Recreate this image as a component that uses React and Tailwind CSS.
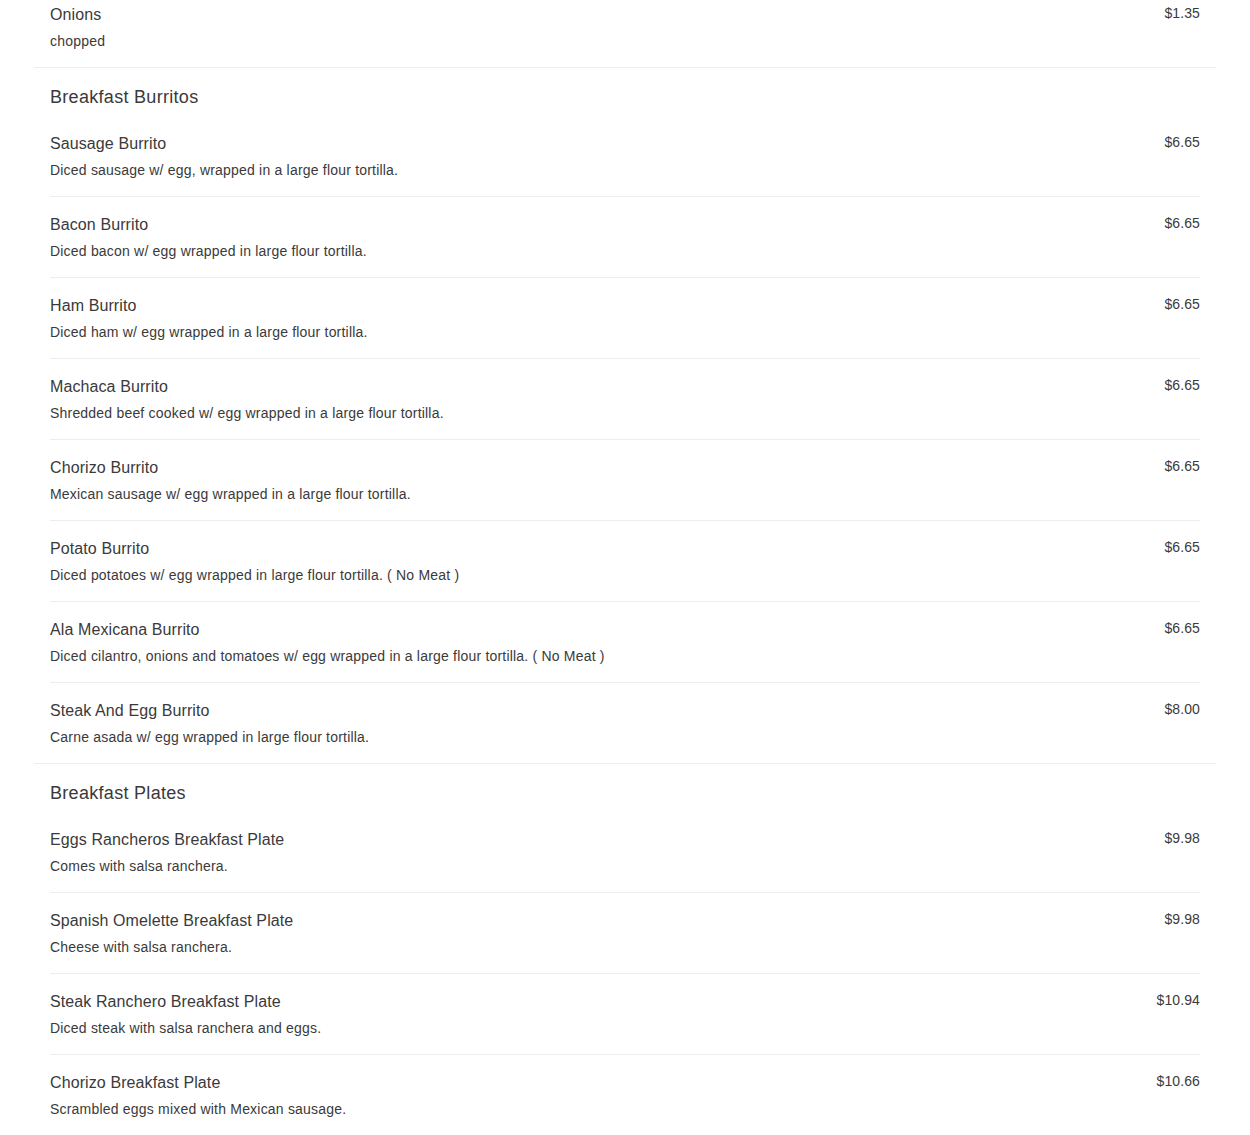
import React from 'react';

const sections = [
  {
    title: 'Breakfast Burritos',
    items: [
      { name: 'Sausage Burrito', desc: 'Diced sausage w/ egg, wrapped in a large flour tortilla.', price: '$6.65' },
      { name: 'Bacon Burrito', desc: 'Diced bacon w/ egg wrapped in large flour tortilla.', price: '$6.65' },
      { name: 'Ham Burrito', desc: 'Diced ham w/ egg wrapped in a large flour tortilla.', price: '$6.65' },
      { name: 'Machaca Burrito', desc: 'Shredded beef cooked w/ egg wrapped in a large flour tortilla.', price: '$6.65' },
      { name: 'Chorizo Burrito', desc: 'Mexican sausage w/ egg wrapped in a large flour tortilla.', price: '$6.65' },
      { name: 'Potato Burrito', desc: 'Diced potatoes w/ egg wrapped in large flour tortilla. ( No Meat )', price: '$6.65' },
      { name: 'Ala Mexicana Burrito', desc: 'Diced cilantro, onions and tomatoes w/ egg wrapped in a large flour tortilla. ( No Meat )', price: '$6.65' },
      { name: 'Steak And Egg Burrito', desc: 'Carne asada w/ egg wrapped in large flour tortilla.', price: '$8.00' },
    ],
  },
  {
    title: 'Breakfast Plates',
    items: [
      { name: 'Eggs Rancheros Breakfast Plate', desc: 'Comes with salsa ranchera.', price: '$9.98' },
      { name: 'Spanish Omelette Breakfast Plate', desc: 'Cheese with salsa ranchera.', price: '$9.98' },
      { name: 'Steak Ranchero Breakfast Plate', desc: 'Diced steak with salsa ranchera and eggs.', price: '$10.94' },
      { name: 'Chorizo Breakfast Plate', desc: 'Scrambled eggs mixed with Mexican sausage.', price: '$10.66' },
    ],
    more: true,
  },
];

function Item({ item, last }) {
  return (
    <div className={`flex justify-between pt-4 pb-4 ${last ? '' : 'border-b border-[#eeeeee]'}`}>
      <div>
        <div className="text-[16px] leading-6 tracking-[0.1px]">{item.name}</div>
        <div className="mt-1 text-[14px] leading-5 tracking-[0.2px]">{item.desc}</div>
      </div>
      <div className="text-[14px] leading-5 tracking-[0.1px]">{item.price}</div>
    </div>
  );
}

export default function App() {
  return (
    <div className="h-[1135px] overflow-hidden bg-white text-[#3a3a3a]" style={{ fontFamily: '"Liberation Sans", Arial, sans-serif' }}>
      <div className="mx-[34px]">
        <div className="-mt-[13px] border-b border-[#eeeeee] px-4">
          <Item item={{ name: 'Onions', desc: 'chopped', price: '$1.35' }} last />
        </div>
        {sections.map((s) => (
          <div key={s.title} className="border-b border-[#eeeeee] px-4">
            <h2 className="pt-[17px] pb-[7px] text-[18px] leading-6 tracking-[0.3px]">{s.title}</h2>
            {s.items.map((it, i) => (
              <Item key={it.name} item={it} last={!s.more && i === s.items.length - 1} />
            ))}
          </div>
        ))}
      </div>
    </div>
  );
}
